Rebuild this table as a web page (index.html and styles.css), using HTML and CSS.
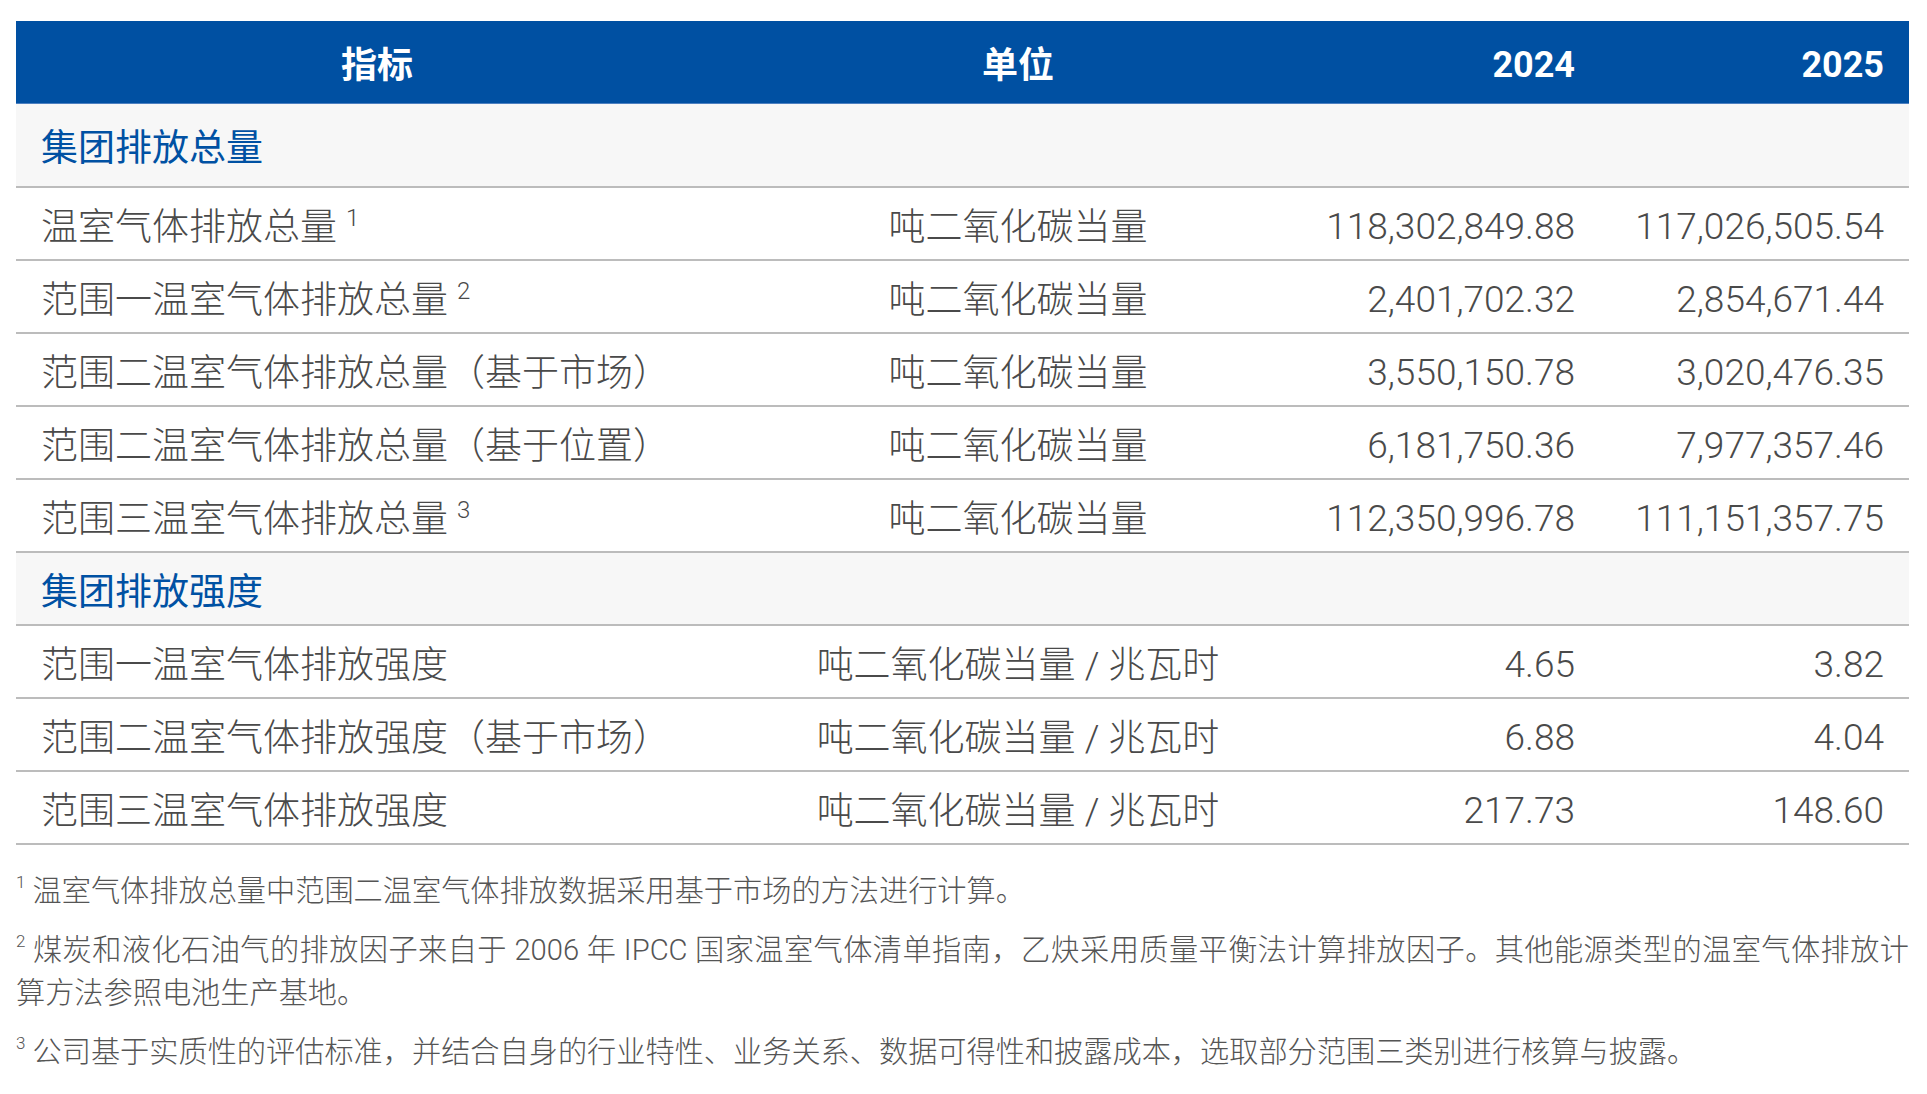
FILE: index.html
```html
<!DOCTYPE html>
<html lang="zh-CN">
<head>
<meta charset="utf-8">
<title>温室气体排放</title>
<link rel="stylesheet" href="styles.css">
</head>
<body>
<div class="page">
  <table class="ghg">
    <colgroup>
      <col class="c-name"><col class="c-unit"><col class="c-y1"><col class="c-y2">
    </colgroup>
    <thead>
      <tr class="head">
        <th class="th-center">指标</th>
        <th class="th-center">单位</th>
        <th class="th-num">2024</th>
        <th class="th-num">2025</th>
      </tr>
    </thead>
    <tbody>
      <tr class="section first"><td colspan="4">集团排放总量</td></tr>
      <tr class="row">
        <td class="name">温室气体排放总量 <sup>1</sup></td>
        <td class="unit">吨二氧化碳当量</td>
        <td class="num">118,302,849.88</td>
        <td class="num">117,026,505.54</td>
      </tr>
      <tr class="row">
        <td class="name">范围一温室气体排放总量 <sup>2</sup></td>
        <td class="unit">吨二氧化碳当量</td>
        <td class="num">2,401,702.32</td>
        <td class="num">2,854,671.44</td>
      </tr>
      <tr class="row">
        <td class="name">范围二温室气体排放总量（基于市场）</td>
        <td class="unit">吨二氧化碳当量</td>
        <td class="num">3,550,150.78</td>
        <td class="num">3,020,476.35</td>
      </tr>
      <tr class="row">
        <td class="name">范围二温室气体排放总量（基于位置）</td>
        <td class="unit">吨二氧化碳当量</td>
        <td class="num">6,181,750.36</td>
        <td class="num">7,977,357.46</td>
      </tr>
      <tr class="row">
        <td class="name">范围三温室气体排放总量 <sup>3</sup></td>
        <td class="unit">吨二氧化碳当量</td>
        <td class="num">112,350,996.78</td>
        <td class="num">111,151,357.75</td>
      </tr>
      <tr class="section"><td colspan="4">集团排放强度</td></tr>
      <tr class="row">
        <td class="name">范围一温室气体排放强度</td>
        <td class="unit">吨二氧化碳当量 / 兆瓦时</td>
        <td class="num">4.65</td>
        <td class="num">3.82</td>
      </tr>
      <tr class="row">
        <td class="name">范围二温室气体排放强度（基于市场）</td>
        <td class="unit">吨二氧化碳当量 / 兆瓦时</td>
        <td class="num">6.88</td>
        <td class="num">4.04</td>
      </tr>
      <tr class="row">
        <td class="name">范围三温室气体排放强度</td>
        <td class="unit">吨二氧化碳当量 / 兆瓦时</td>
        <td class="num">217.73</td>
        <td class="num">148.60</td>
      </tr>
    </tbody>
  </table>

  <div class="notes">
    <p class="note"><sup>1</sup> 温室气体排放总量中范围二温室气体排放数据采用基于市场的方法进行计算。</p>
    <p class="note"><sup>2</sup> 煤炭和液化石油气的排放因子来自于 2006 年 IPCC 国家温室气体清单指南，乙炔采用质量平衡法计算排放因子。其他能源类型的温室气体排放计算方法参照电池生产基地。</p>
    <p class="note"><sup>3</sup> 公司基于实质性的评估标准，并结合自身的行业特性、业务关系、数据可得性和披露成本，选取部分范围三类别进行核算与披露。</p>
  </div>
</div>
</body>
</html>
```

FILE: styles.css
```css
html, body {
  margin: 0;
  padding: 0;
  background: #ffffff;
}

body {
  font-family: Roboto, "Noto Sans CJK SC", sans-serif;
  font-weight: 300;
  color: #4a4a4a;
}

.page {
  padding: 21px 18px 0 16px;
}

.ghg {
  width: 1893px;
  border-collapse: collapse;
  table-layout: fixed;
}

.c-name { width: 722px; }
.c-unit { width: 560px; }
.c-y1 { width: 302px; }
.c-y2 { width: 309px; }

.head th {
  background: #0050a2;
  color: #ffffff;
  font-family: Roboto, "Noto Sans CJK SC", sans-serif;
  font-weight: 700;
  font-size: 36px;
  height: 82px;
  padding: 0 25px;
  border-bottom: 1px solid #4d80c0;
}

.th-center { text-align: center; }

.head .th-num {
  text-align: right;
  height: 77px;
  padding-top: 5px;
}

.section td {
  background: #f7f7f7;
  color: #0051a3;
  font-weight: 400;
  font-size: 37px;
  height: 71px;
  padding: 0 25px;
  border-bottom: 2px solid #bcbcbc;
}

.section.first td {
  height: 82px;
}

.row td {
  font-size: 37px;
  height: 71px;
  padding: 0 25px;
  border-bottom: 2px solid #bcbcbc;
  white-space: nowrap;
}

.row .unit { text-align: center; }

.row .num {
  text-align: right;
  height: 65px;
  padding-top: 6px;
}

.row sup {
  font-size: 24px;
  vertical-align: 0.6em;
  line-height: 0;
}

.notes {
  width: 1893px;
  padding-top: 25px;
}

.note {
  margin: 0 0 16px 0;
  font-size: 29.2px;
  line-height: 43px;
  color: #555555;
  text-align: justify;
}

.note sup {
  font-size: 17px;
  vertical-align: 0.75em;
  line-height: 0;
}
```
